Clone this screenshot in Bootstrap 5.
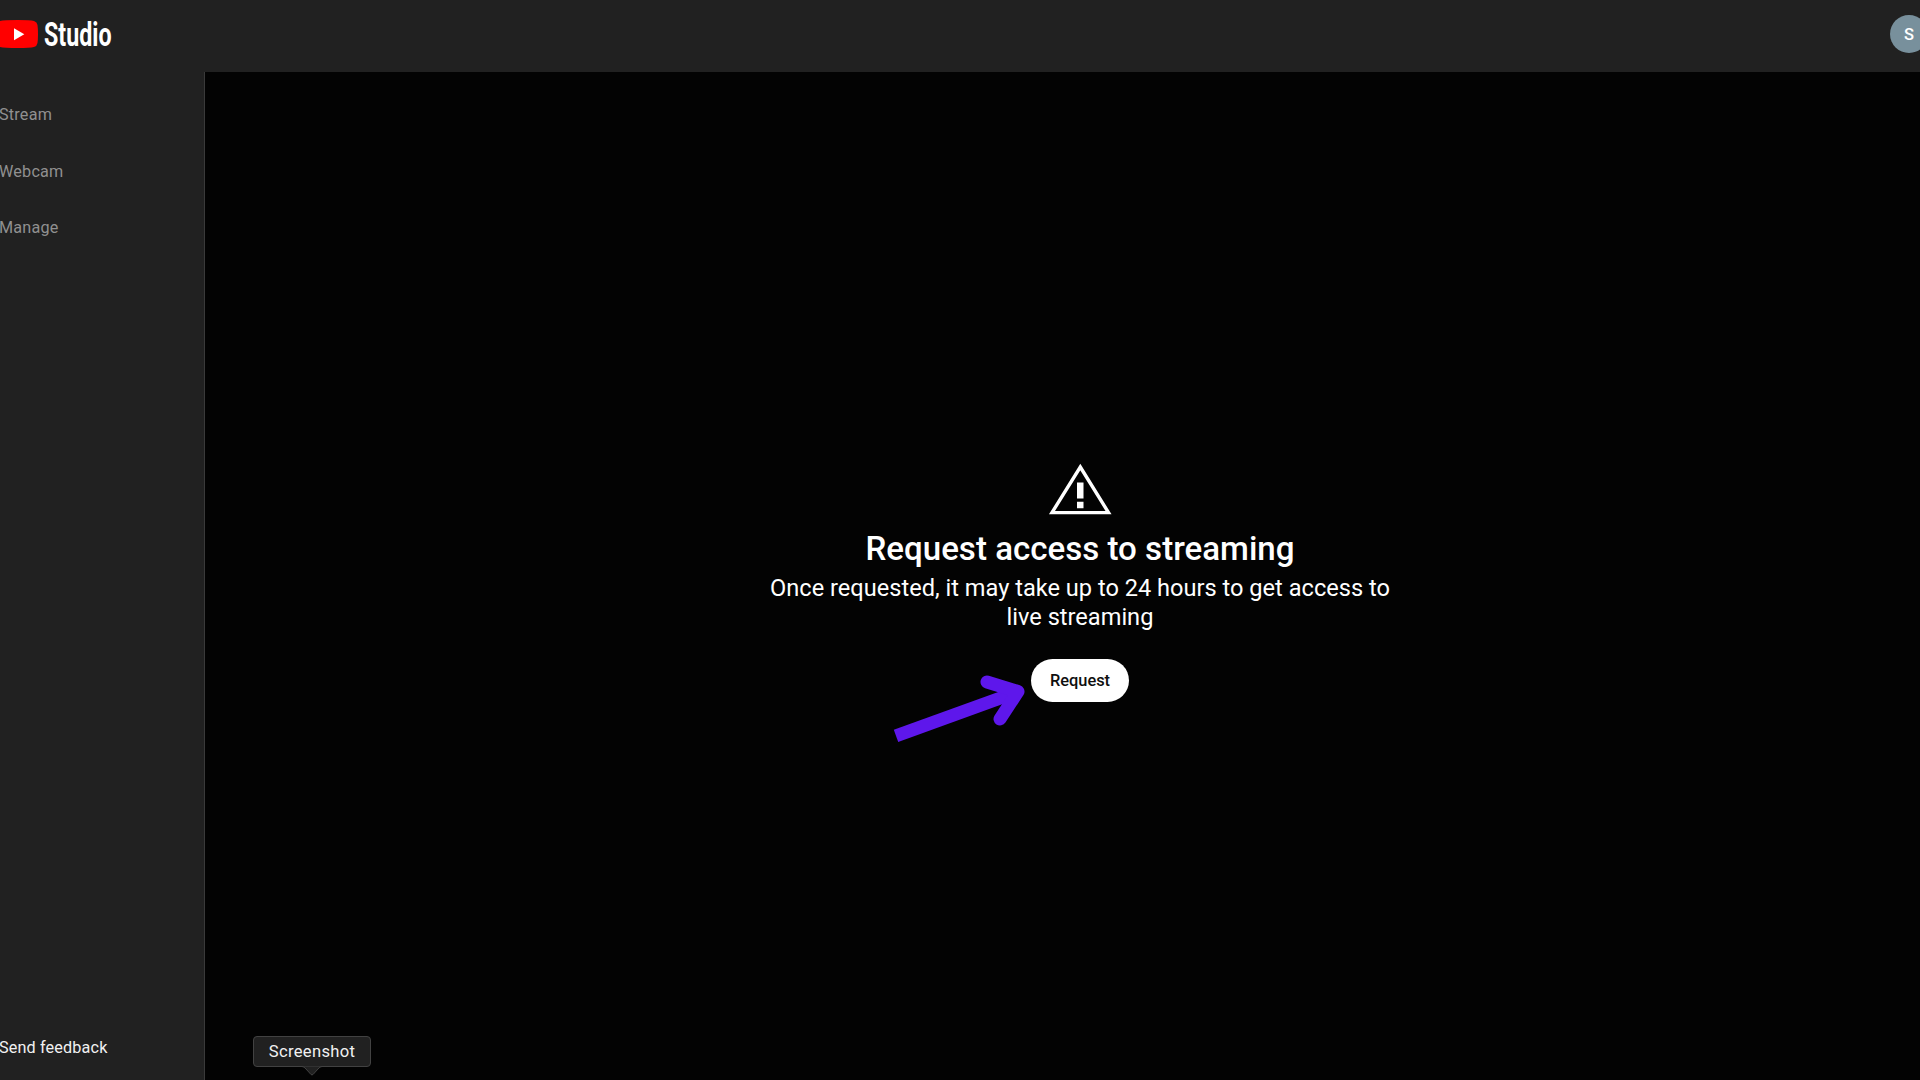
<!DOCTYPE html>
<html lang="en" data-bs-theme="dark">
<head>
<meta charset="utf-8">
<title>YouTube Studio</title>
<meta name="viewport" content="width=device-width, initial-scale=1">
<link href="https://cdn.jsdelivr.net/npm/bootstrap@5.3.0/dist/css/bootstrap.min.css" rel="stylesheet">
<style>
body { font-family: Roboto, "Liberation Sans", sans-serif; background: #030303; color: #fff; }
.topbar { height: 72px; background: #212121; flex-shrink: 0; }
.logo { width: 160px; height: 72px; overflow: visible; }
.user-pic { width: 38px; height: 38px; background: #78909c; font-size: 16.5px; font-weight: 500; margin: -4px -8px 0 0; padding-top: 2px; }
.sidebar { width: 205px; background: #212121; border-right: 1px solid #3a3a3a; }
.side-item { height: 56.8px; margin-left: -1px; font-size: 16.2px; letter-spacing: .2px; color: #909090; padding: 0; }
.side-list { padding-top: 14.5px; }
.feedback { color: #f1f1f1; margin-bottom: 3px; letter-spacing: .15px; }
.prompt { width: 650px; margin-left: 35px; padding-top: 391px; }
.heading { font-size: 33.1px; font-weight: 500; line-height: 40px; margin: 14px 0 4.5px; }
.blurb { font-size: 23.6px; line-height: 29px; margin-bottom: 27.5px; }
.btn-request { width: 98px; height: 43px; background: #fff; color: #0f0f0f; font-size: 16.4px; font-weight: 500; }
.btn-request.btn { padding: 1px 0 0; }
.pointer-arrow { left: 880px; top: 670px; }
.tip { left: 253px; top: 1036px; width: 118px; height: 31px; background: #212121; border: 1px solid #424242; border-radius: 4px; font-size: 16.6px; letter-spacing: .3px; color: #f1f1f1; padding-top: 1px; }
.tip svg { left: 47px; top: 28px; }
</style>
</head>
<body class="vh-100 overflow-hidden d-flex flex-column position-relative">
<header class="topbar d-flex align-items-center justify-content-between">
  <svg class="logo" viewBox="0 0 160 72" role="img" aria-label="YouTube Studio">
    <path fill="#f00" d="M0 21Q4 20 18 20Q30 20 34 21Q37 22 37.5 25Q38 29 38 34Q38 40 37.5 43Q37 46 34 47Q30 48 18 48Q4 48 0 47Z"/>
    <path fill="#fff" d="M14 28.3V40.3L24.3 34.3Z"/>
    <text x="44" y="46" font-size="34" font-weight="700" fill="#fff" textLength="67.5" lengthAdjust="spacingAndGlyphs">Studio</text>
  </svg>
  <div class="user-pic rounded-circle d-flex align-items-center justify-content-center">S</div>
</header>
<div class="d-flex flex-grow-1">
  <nav class="sidebar side-list nav flex-column flex-nowrap flex-shrink-0">
    <a class="nav-link side-item d-flex align-items-center" href="#">Stream</a>
    <a class="nav-link side-item d-flex align-items-center" href="#">Webcam</a>
    <a class="nav-link side-item d-flex align-items-center" href="#">Manage</a>
    <a class="nav-link side-item feedback d-flex align-items-center mt-auto" href="#">Send feedback</a>
  </nav>
  <main class="flex-grow-1 d-flex justify-content-center align-items-start">
    <section class="prompt d-flex flex-column align-items-center text-center">
      <svg width="64" height="52" viewBox="1048 463 64 52"><path fill="none" stroke="#fff" stroke-width="3.4" d="M1080.3 467L1108.5 512.6H1052Z"/><path fill="#fff" d="M1077 482.5h6.5v16H1077zM1077 501.8h6.5v6.4H1077z"/></svg>
      <h1 class="heading">Request access to streaming</h1>
      <p class="blurb">Once requested, it may take up to 24 hours to get access to<br>live streaming</p>
      <button class="btn btn-request rounded-pill border-0">Request</button>
    </section>
  </main>
</div>
<svg class="pointer-arrow position-absolute" width="150" height="80" viewBox="0 -10 150 80" fill="none" stroke="#5e17eb" stroke-width="13"><path d="M16 55.8L137 12"/><path stroke-linecap="round" stroke-linejoin="round" d="M107 2L138 11.5L120 39"/></svg>
<div class="tip position-absolute d-flex align-items-center justify-content-center">Screenshot<svg class="position-absolute" width="22" height="12"><path fill="#212121" stroke="#424242" d="M1 1.5Q3 1.5 5 4L10 9.5Q11 10.3 12 9.5L17 4Q19 1.5 21 1.5"/></svg></div>
<script src="https://cdn.jsdelivr.net/npm/bootstrap@5.3.0/dist/js/bootstrap.bundle.min.js"></script>
</body>
</html>
